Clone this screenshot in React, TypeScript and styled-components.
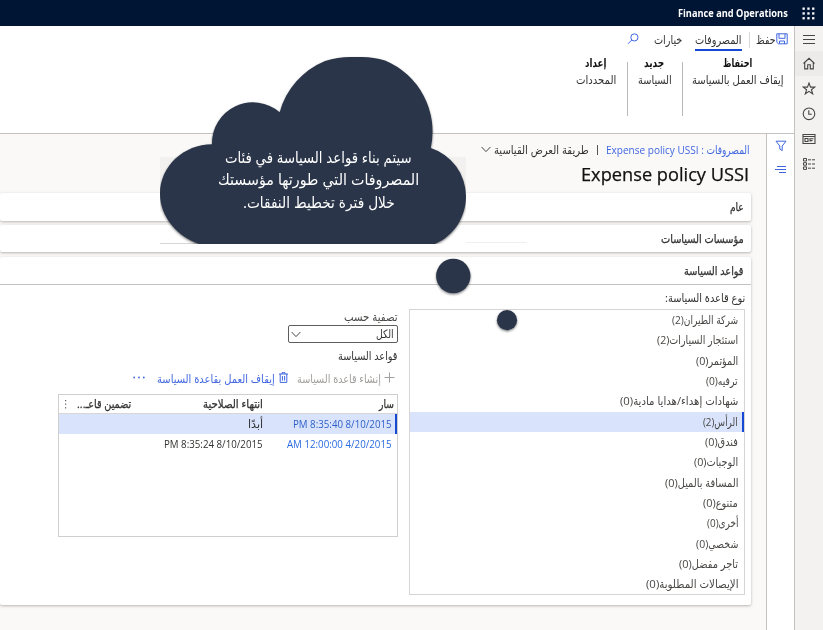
import React, { useLayoutEffect, useRef, useState } from 'react';
import styled, { createGlobalStyle, css } from 'styled-components';

const FONT = '"Open Sans", "DejaVu Sans Condensed", "DejaVu Sans", sans-serif';

const Global = createGlobalStyle`
  * { box-sizing: border-box; }
  body { margin: 0; overflow: hidden; background: #fff; font-family: ${FONT}; }
`;

/* ---------- text fitted to a column width ---------- */
const FitBox = styled.span<{ $w: number }>`
  display: block;
  flex: none;
  width: ${p => p.$w}px;
  white-space: nowrap;
`;
const FitInner = styled.span<{ $size: number; $weight: number; $color: string }>`
  display: block;
  width: max-content;
  transform-origin: 100% 50%;
  font-size: ${p => p.$size}px;
  font-weight: ${p => p.$weight};
  color: ${p => p.$color};
  -webkit-text-stroke: ${p => (p.$weight === 500 ? 0.25 : 0)}px ${p => p.$color};
`;
type FitProps = { w: number; size?: number; weight?: number; color?: string; children: React.ReactNode };
function Fit({ w, size = 11.5, weight = 400, color = '#323130', children }: FitProps) {
  const ref = useRef<HTMLSpanElement>(null);
  const [scale, setScale] = useState(1);
  useLayoutEffect(() => {
    if (ref.current) setScale(w / ref.current.offsetWidth);
  }, [w]);
  return (
    <FitBox $w={w}>
      <FitInner ref={ref} $size={size} $weight={weight} $color={color} style={{ transform: `scaleX(${scale})` }}>
        {children}
      </FitInner>
    </FitBox>
  );
}

/* ---------- shell ---------- */
const Page = styled.div`
  position: relative;
  direction: rtl;
  width: 823px;
  height: 630px;
  display: flex;
  flex-direction: column;
  overflow: hidden;
  line-height: 16px;
`;
const TopBar = styled.header`
  height: 26px;
  flex: none;
  display: flex;
  align-items: center;
  gap: 14px;
  padding: 0 8px 0 0;
  background: #001433;
`;
const Shell = styled.div`
  flex: 1;
  min-height: 0;
  display: flex;
`;
const NavRail = styled.nav`
  width: 29px;
  flex: none;
  background: #f3f2f1;
  border-left: 1px solid #c3c2c1;
  display: flex;
  flex-direction: column;
`;
const NavItem = styled.div<{ $active?: boolean }>`
  height: 25.1px;
  display: flex;
  align-items: center;
  justify-content: center;
  background: ${p => (p.$active ? '#edebe9' : 'transparent')};
`;
const Main = styled.main`
  flex: 1;
  min-width: 0;
  display: flex;
  flex-direction: column;
`;

/* ---------- ribbon ---------- */
const Ribbon = styled.section`
  height: 108px;
  flex: none;
  background: #fff;
  border-bottom: 1px solid #c3c2c1;
`;
const Tabs = styled.div`
  height: 27px;
  display: flex;
  align-items: center;
  padding-right: 6px;
`;
const SaveSlot = styled.div`
  display: flex;
  margin-bottom: 2px;
`;
const Tab = styled.div<{ $active?: boolean; $gap: number }>`
  height: 22px;
  margin-right: ${p => p.$gap}px;
  padding-top: 3px;
  border-bottom: 2px solid ${p => (p.$active ? '#1549d4' : 'transparent')};
`;
const TabRule = styled.div`
  width: 1px;
  height: 16px;
  margin-right: 6px;
  background: #d8d7d6;
`;
const SearchSlot = styled.div`
  margin: 0 15px 2px 0;
  display: flex;
`;
const Groups = styled.div`
  display: flex;
  padding-top: 2px;
`;
const Group = styled.div<{ $w: number; $last?: boolean }>`
  width: ${p => p.$w}px;
  height: 60px;
  display: flex;
  flex-direction: column;
  align-items: center;
  gap: 1px;
  position: relative;
  ${p => !p.$last && css`
    &::after { content: ''; position: absolute; left: 0; top: 7px; width: 1px; height: 54px; background: #b9b8b7; }
  `}
`;

/* ---------- body ---------- */
const Body = styled.div`
  flex: 1;
  min-height: 0;
  display: flex;
`;
const FilterStrip = styled.aside`
  width: 28px;
  flex: none;
  background: #fff;
  border-left: 1px solid #c3c2c1;
  display: flex;
  flex-direction: column;
  align-items: center;
  padding: 6px 0 0 0;
  gap: 13px;
`;
const Content = styled.div`
  flex: 1;
  min-width: 0;
  background: #faf9f8;
  padding-right: 15px;
`;
const Crumbs = styled.div`
  height: 32px;
  display: flex;
  align-items: center;
  padding-right: 1px;
`;
const CrumbRule = styled.span`
  width: 1px;
  height: 10px;
  margin: 0 8px;
  background: #555;
`;
const ChevronSlot = styled.span`
  display: flex;
  margin: 0 3px 2px 0;
`;
const Title = styled.div`
  height: 27px;
  padding: 1px 2px 0 0;
  line-height: 24px;
  margin-top: -5px;
  margin-bottom: 5px;
`;
const Card = styled.section<{ $h: number; $gap: number }>`
  height: ${p => p.$h}px;
  margin-bottom: ${p => p.$gap}px;
  background: #fff;
  border-radius: 2px;
  box-shadow: 0 1px 3px rgba(0, 0, 0, 0.28);
`;
const CardHead = styled.div<{ $open?: boolean }>`
  height: 28px;
  display: flex;
  align-items: center;
  padding: 1px 7px 0 0;
  border-bottom: 1px solid ${p => (p.$open ? '#c3c2c1' : 'transparent')};
`;
const Columns = styled.div`
  display: flex;
  gap: 11px;
  padding: 5px 6px 0 0;
`;
const TypeColumn = styled.div`
  width: 336px;
`;
const TypeList = styled.div`
  height: 286px;
  margin-top: 3px;
  border: 1px solid #d6d5d4;
`;
const TypeRow = styled.div<{ $on?: boolean }>`
  height: 20.33px;
  display: flex;
  align-items: center;
  padding: 0 4px 0 0;
  border-right: 2px solid ${p => (p.$on ? '#1549d4' : 'transparent')};
  background: ${p => (p.$on ? '#d9e4fc' : 'transparent')};
`;
const RuleColumn = styled.div`
  width: 340px;
  padding-top: 19px;
`;
const Select = styled.div`
  width: 110px;
  height: 18px;
  margin-bottom: 5px;
  border: 1px solid #605e5c;
  border-radius: 2px;
  display: flex;
  align-items: center;
  justify-content: space-between;
  padding: 0 3px 0 2px;
`;
const Toolbar = styled.div`
  height: 30px;
  display: flex;
  align-items: center;
  padding: 0 3px 1px 0;
`;
const ToolIcon = styled.span<{ $before?: number; $after?: number }>`
  display: flex;
  margin-right: ${p => p.$before ?? 0}px;
  margin-left: ${p => p.$after ?? 0}px;
  margin-bottom: 2px;
`;
const Table = styled.div`
  height: 143px;
  border: 1px solid #d0cfce;
`;
const TableRow = styled.div<{ $head?: boolean; $on?: boolean }>`
  height: ${p => (p.$head ? 19 : 20)}px;
  display: grid;
  grid-template-columns: 131px 132px 60px 1fr;
  align-items: center;
  padding-right: ${p => (p.$head ? 3 : 1)}px;
  border-right: ${p => (p.$head ? 0 : 2)}px solid ${p => (p.$on ? '#1549d4' : 'transparent')};
  border-bottom: ${p => (p.$head ? 1 : 0)}px solid #d8d7d6;
  background: ${p => (p.$on ? '#d9e4fc' : 'transparent')};
`;
const DateCell = styled.div`
  padding-right: 2px;
`;
const MoreCell = styled.div`
  display: flex;
  justify-content: flex-end;
  padding-left: 6px;
`;

/* ---------- callout ---------- */
const Callout = styled.div`
  position: absolute;
  left: 160px;
  top: 56px;
  width: 370px;
  height: 280px;
`;
const CalloutText = styled.div`
  position: absolute;
  top: 90px;
  left: 0;
  width: 317px;
  display: flex;
  flex-direction: column;
  align-items: center;
  line-height: 22.4px;
`;

/* ---------- icons ---------- */
const Svg = styled.svg<{ $c: string }>`
  display: block;
  flex: none;
  fill: none;
  stroke: ${p => p.$c};
`;
const Waffle = () => (
  <Svg $c="none" width="13" height="13">
    {[0, 4.8, 9.6].flatMap(y => [0, 4.8, 9.6].map(x => <rect key={`${x}-${y}`} x={x + 0.5} y={y + 0.5} width="2.3" height="2.3" fill="#fff" />))}
  </Svg>
);
const NAV = '#484644';
const MenuIcon = () => <Svg $c={NAV} width="14" height="12"><path d="M1 2.5h12M1 6.5h12M1 10.5h12" /></Svg>;
const HomeIcon = () => <Svg $c={NAV} width="14" height="14" strokeWidth="1.1"><path d="M1.5 6.5 7 1.3 12.5 6.5M2.7 5.5v6.4h3V7.7h2.6v4.2h3V5.5" /></Svg>;
const StarIcon = () => <Svg $c={NAV} width="14" height="14" strokeWidth="1.1"><path d="m7 1 1.5 4.1h4.3L9.4 7.7l1.3 4.3L7 9.4 3.3 12l1.3-4.3L1.2 5.1h4.3z" /></Svg>;
const ClockIcon = () => <Svg $c={NAV} width="14" height="14" strokeWidth="1.1"><circle cx="7" cy="6.8" r="5.8" /><path d="M6.8 3.3v4h3" /></Svg>;
const WorkspaceIcon = () => <Svg $c={NAV} width="14" height="14" strokeWidth="1.1"><path d="M1 2.5h12v9H1zM1 4.5h12M3 6.5h3v3H3zM8 9.5V6.8h3.5M8 8.6h2.5" /></Svg>;
const ModulesIcon = () => <Svg $c={NAV} width="14" height="14" strokeWidth="1"><path d="M1.5 1.5h3v2.5h-3zM1.5 5.7h3v2.5h-3zM1.5 9.9h3v2.5h-3zM6 2.8h3M10 2.8h3M6 7h3M10 7h3M6 11.2h3M10 11.2h3" /></Svg>;
const BLUE = '#3f66e0';
const SaveIcon = () => <Svg $c={BLUE} width="12" height="12"><path d="M.8.8h10.4v10H2.5L.8 9.2zM3 .8v4.5h6V.8M3.5 10.8V8h5v2.8" /></Svg>;
const SearchIcon = () => <Svg $c={BLUE} width="12" height="12"><circle cx="7.4" cy="4.4" r="3.6" /><path d="M4.8 7 1 10.8" /></Svg>;
const FunnelIcon = () => <Svg $c={BLUE} width="12" height="12"><path d="M1 1.2h10L7.2 6v4.6L4.8 9.1V6z" /></Svg>;
const LinesIcon = () => <Svg $c={BLUE} width="12" height="9"><path d="M2 1.5h9M0 4.5h11M4 7.5h7" /></Svg>;
const Chevron = () => <Svg $c="#484644" width="10" height="7"><path d="m.6 1 4.4 4.6L9.4 1" /></Svg>;
const PlusIcon = () => <Svg $c="#a19f9d" width="11" height="11"><path d="M5.5.5v10M.5 5.5h10" /></Svg>;
const TrashIcon = () => <Svg $c={BLUE} width="9" height="11"><path d="M0 2h9M3 2V.7h3V2M1.2 2v8.4h6.6V2M3.4 4v4.6M5.6 4v4.6" /></Svg>;
const EllipsisIcon = () => <Svg $c="none" width="12" height="3"><g fill={BLUE}><circle cx="1.2" cy="1.5" r=".9" /><circle cx="6" cy="1.5" r=".9" /><circle cx="10.8" cy="1.5" r=".9" /></g></Svg>;
const DotsIcon = () => <Svg $c="none" width="2" height="9"><g fill="#605e5c"><rect y="0" width="1.2" height="1.2" /><rect y="3.6" width="1.2" height="1.2" /><rect y="7.2" width="1.2" height="1.2" /></g></Svg>;

const CloudShape = () => (
  <Svg $c="none" width="370" height="280">
    <defs>
      <filter id="drop" x="-20%" y="-20%" width="140%" height="150%">
        <feDropShadow dx="0" dy="1.2" stdDeviation=".8" floodColor="#000" floodOpacity=".5" />
      </filter>
      <clipPath id="base"><rect width="306" height="188" /></clipPath>
    </defs>
    <rect x="0" y="101" width="306" height="55" fill="rgba(0,0,0,.03)" />
    <rect x="0" y="187" width="40" height="1" fill="#d8d7d6" />
    <rect x="306" y="186" width="61" height="1" fill="#f0efee" />
    <g clipPath="url(#base)">
      <path
        filter="url(#drop)"
        d="M52 88.3A41 41 0 0 1 119.7 56.2 78 78 0 0 1 165 5Q178 1 190 1h12Q214 1 225 4.5A77 77 0 0 1 270.8 92 51 51 0 0 1 306 140c0 21-12 40-31 48H39C18 181 0 161 0 138 0 110 24 88.3 52 88.3z"
        fill="#2b3648"
      />
    </g>
    <g fill="#2b3648" filter="url(#drop)">
      <circle cx="293.3" cy="220" r="17.2" />
      <circle cx="347" cy="264.2" r="10.1" />
    </g>
  </Svg>
);

/* ---------- data ---------- */
const types: { name: string; w: number; on?: boolean }[] = [
  { name: 'شركة الطيران(2)', w: 66 },
  { name: 'استئجار السيارات(2)', w: 81 },
  { name: 'المؤتمر(0)', w: 42 },
  { name: 'ترفيه(0)', w: 32 },
  { name: 'شهادات إهداء/هدايا مادية(0)', w: 118 },
  { name: 'الرأس(2)', w: 35, on: true },
  { name: 'فندق(0)', w: 33 },
  { name: 'الوجبات(0)', w: 44 },
  { name: 'المسافة بالميل(0)', w: 73 },
  { name: 'متنوع(0)', w: 35 },
  { name: 'أخرى(0)', w: 31 },
  { name: 'شخصي(0)', w: 42 },
  { name: 'تاجر مفضل(0)', w: 59 },
  { name: 'الإيصالات المطلوبة(0)', w: 92 },
];
const callout = [
  { text: 'سيتم بناء قواعد السياسة في فئات', w: 187 },
  { text: 'المصروفات التي طورتها مؤسستك', w: 201 },
  { text: 'خلال فترة تخطيط النفقات.', w: 152 },
];
const nav = [MenuIcon, HomeIcon, StarIcon, ClockIcon, WorkspaceIcon, ModulesIcon];

export default function App() {
  return (
    <Page>
      <Global />
      <TopBar>
        <Waffle />
        <Fit w={110} size={10.5} weight={700} color="#fff">Finance and Operations</Fit>
      </TopBar>
      <Shell>
        <NavRail>
          {nav.map((Icon, i) => <NavItem key={i} $active={i === 1}><Icon /></NavItem>)}
        </NavRail>
        <Main>
          <Ribbon>
            <Tabs>
              <SaveSlot><SaveIcon /></SaveSlot>
              <Tab $gap={1}><Fit w={19}>حفظ</Fit></Tab>
              <TabRule />
              <Tab $gap={7} $active><Fit w={47}>المصروفات</Fit></Tab>
              <Tab $gap={13}><Fit w={28}>خيارات</Fit></Tab>
              <SearchSlot><SearchIcon /></SearchSlot>
            </Tabs>
            <Groups>
              <Group $w={112}>
                <Fit w={29} weight={700} color="#111">احتفاظ</Fit>
                <Fit w={92}>إيقاف العمل بالسياسة</Fit>
              </Group>
              <Group $w={55}>
                <Fit w={20} weight={700} color="#111">جديد</Fit>
                <Fit w={34}>السياسة</Fit>
              </Group>
              <Group $w={62} $last>
                <Fit w={21} weight={700} color="#111">إعداد</Fit>
                <Fit w={40}>المحددات</Fit>
              </Group>
            </Groups>
          </Ribbon>
          <Body>
            <FilterStrip><FunnelIcon /><LinesIcon /></FilterStrip>
            <Content>
              <Crumbs>
                <Fit w={144} color="#3f66e0">المصروفات : Expense policy USSI</Fit>
                <CrumbRule />
                <Fit w={95}>طريقة العرض القياسية</Fit>
                <ChevronSlot><Chevron /></ChevronSlot>
              </Crumbs>
              <Title><Fit w={168} size={18} weight={500} color="#111">Expense policy USSI</Fit></Title>
              <Card $h={28} $gap={4}><CardHead><Fit w={14} weight={500}>عام</Fit></CardHead></Card>
              <Card $h={27} $gap={5}><CardHead><Fit w={83} weight={500}>مؤسسات السياسات</Fit></CardHead></Card>
              <Card $h={348} $gap={0}>
                <CardHead $open><Fit w={60} weight={500}>قواعد السياسة</Fit></CardHead>
                <Columns>
                  <TypeColumn>
                    <Fit w={80}>نوع قاعدة السياسة:</Fit>
                    <TypeList>
                      {types.map(t => <TypeRow key={t.name} $on={t.on}><Fit w={t.w} color="#484644">{t.name}</Fit></TypeRow>)}
                    </TypeList>
                  </TypeColumn>
                  <RuleColumn>
                    <Fit w={54} color="#484644">تصفية حسب</Fit>
                    <Select><Fit w={18}>الكل</Fit><Chevron /></Select>
                    <Fit w={60}>قواعد السياسة</Fit>
                    <Toolbar>
                      <ToolIcon $after={3}><PlusIcon /></ToolIcon>
                      <Fit w={84} color="#a19f9d">إنشاء قاعدة السياسة</Fit>
                      <ToolIcon $before={9} $after={4}><TrashIcon /></ToolIcon>
                      <Fit w={118} color="#3f66e0">إيقاف العمل بقاعدة السياسة</Fit>
                      <ToolIcon $before={12}><EllipsisIcon /></ToolIcon>
                    </Toolbar>
                    <Table>
                      <TableRow $head>
                        <Fit w={15} weight={500}>سار</Fit>
                        <Fit w={60} weight={500}>انتهاء الصلاحية</Fit>
                        <Fit w={54} weight={500}>تضمين قاعـ...</Fit>
                        <MoreCell><DotsIcon /></MoreCell>
                      </TableRow>
                      <TableRow $on>
                        <DateCell><Fit w={99} color="#2b5fc7">PM 8:35:40 8/10/2015</Fit></DateCell>
                        <Fit w={15}>أبدًا</Fit>
                      </TableRow>
                      <TableRow>
                        <DateCell><Fit w={105} color="#2b6be0">AM 12:00:00 4/20/2015</Fit></DateCell>
                        <Fit w={99}>PM 8:35:24 8/10/2015</Fit>
                      </TableRow>
                    </Table>
                  </RuleColumn>
                </Columns>
              </Card>
            </Content>
          </Body>
        </Main>
      </Shell>
      <Callout>
        <CloudShape />
        <CalloutText>
          {callout.map(l => <Fit key={l.text} w={l.w} size={15.5} color="#fff">{l.text}</Fit>)}
        </CalloutText>
      </Callout>
    </Page>
  );
}
